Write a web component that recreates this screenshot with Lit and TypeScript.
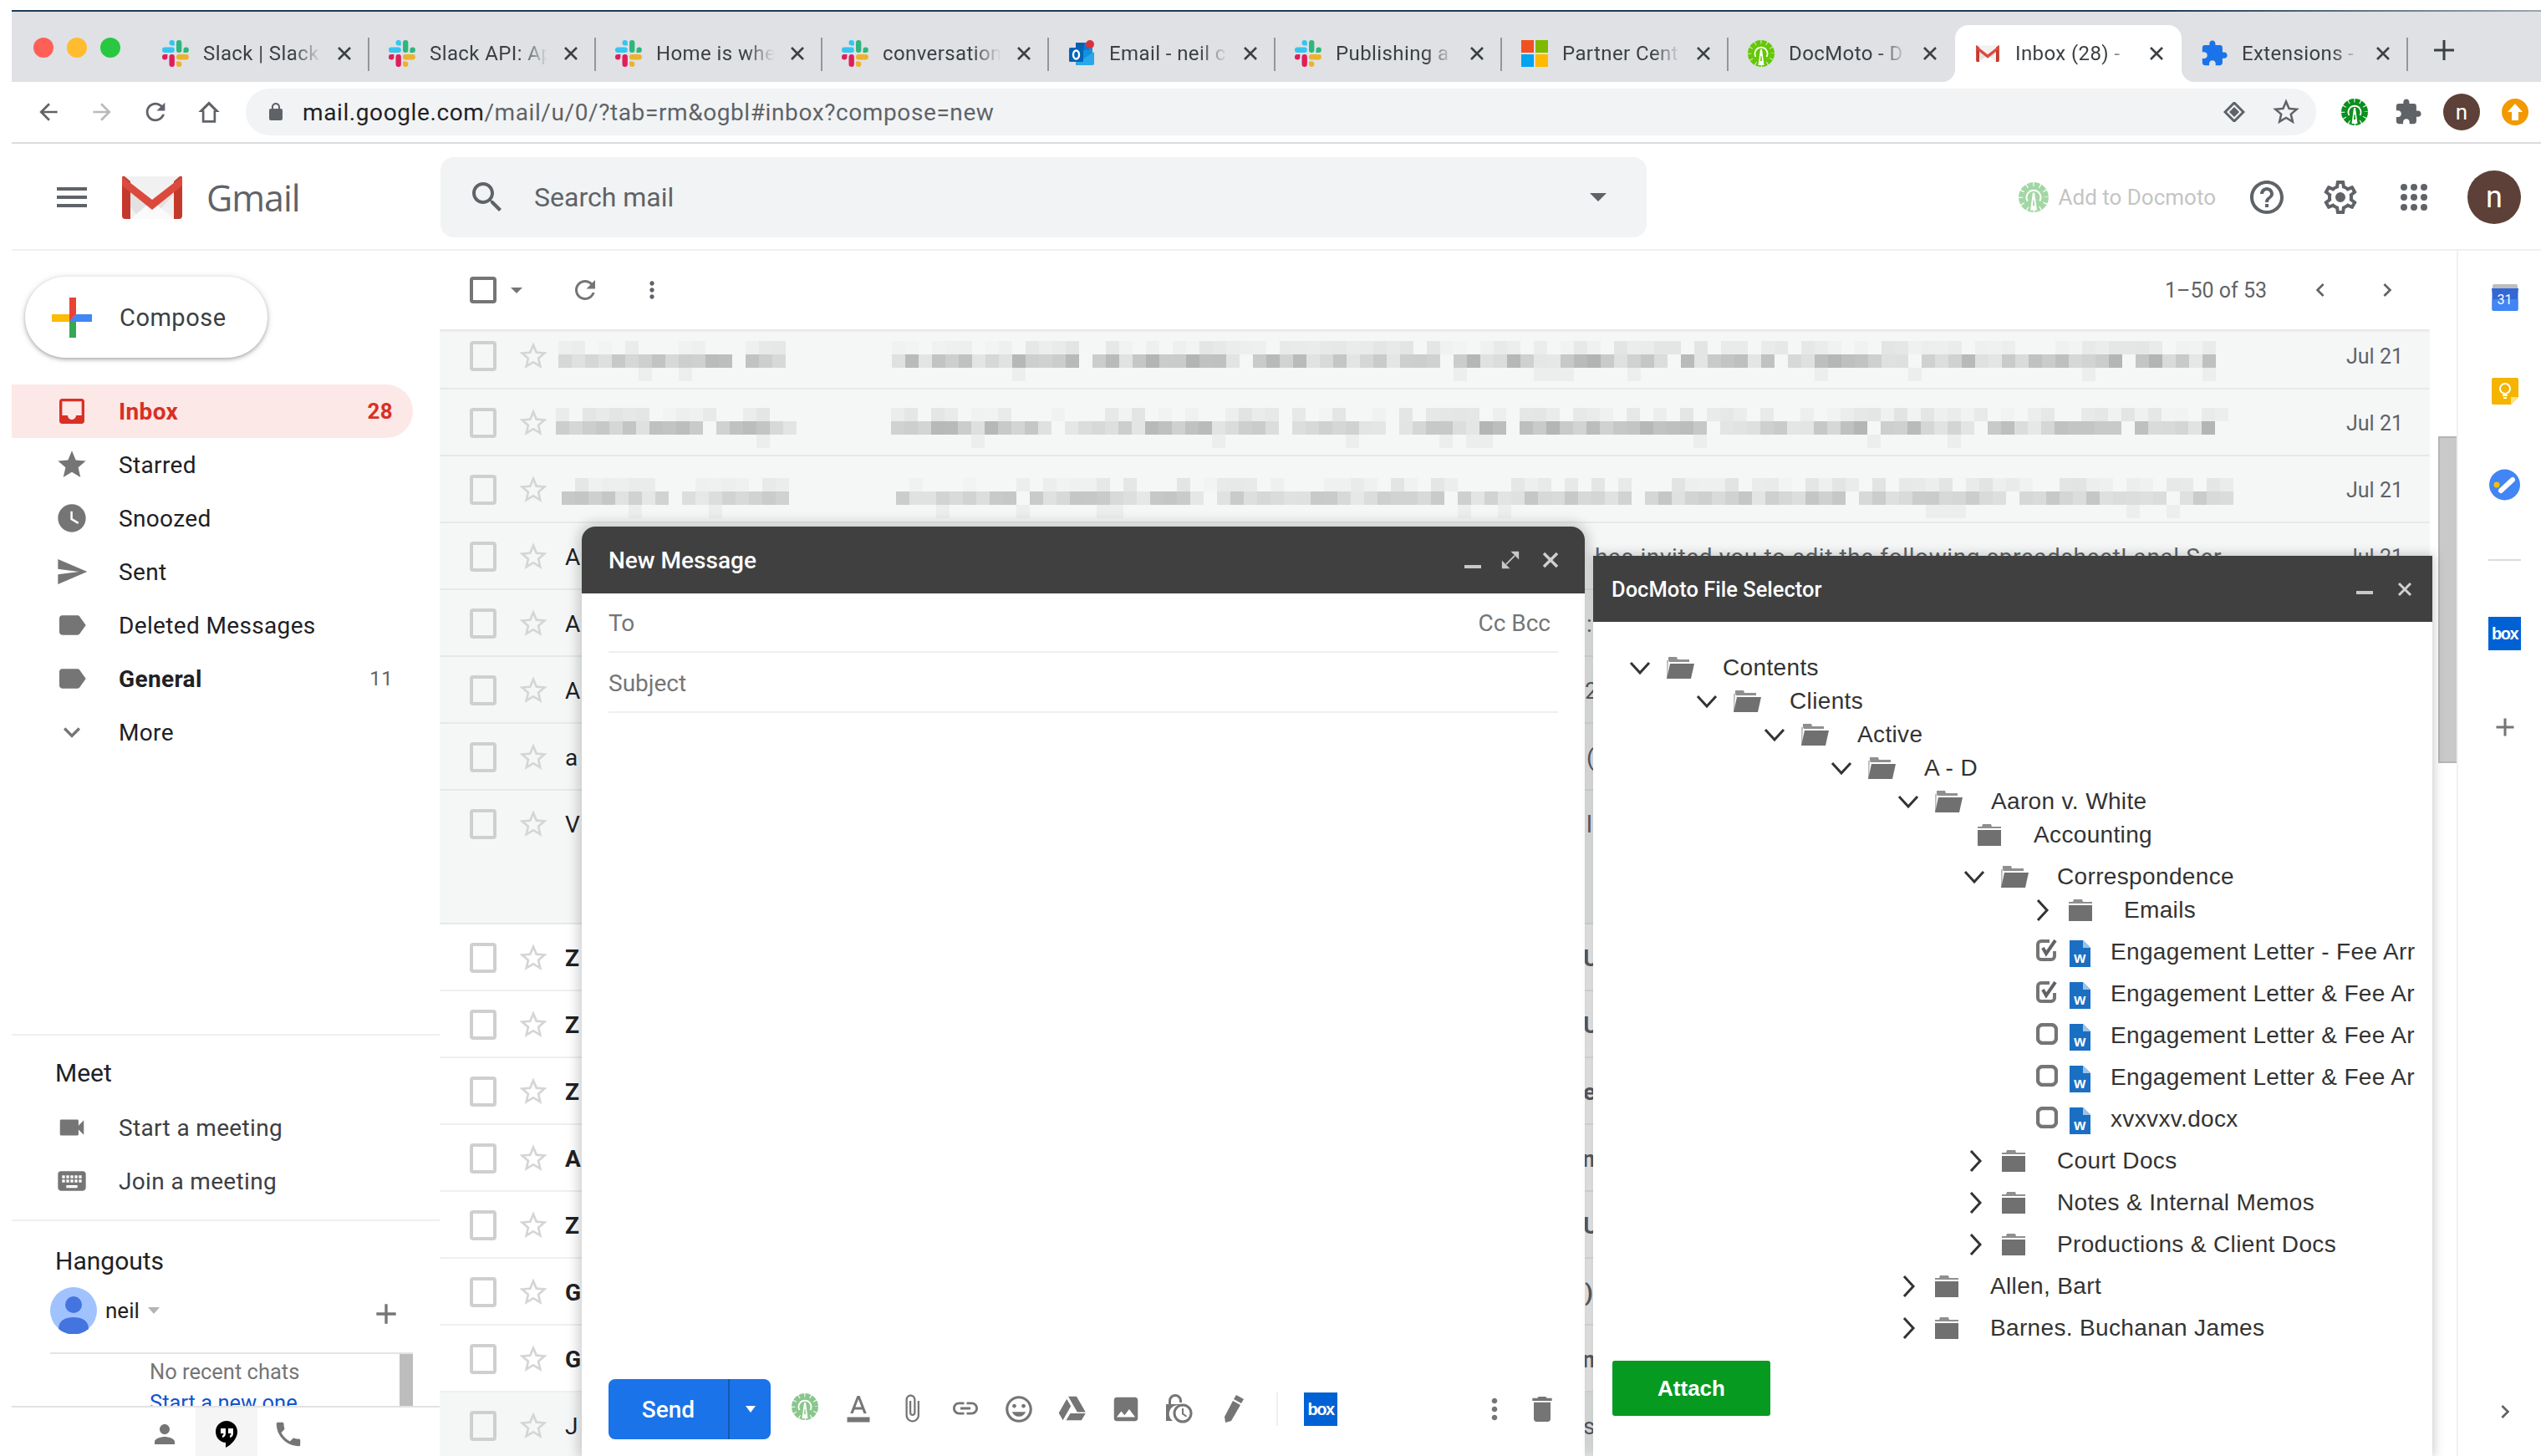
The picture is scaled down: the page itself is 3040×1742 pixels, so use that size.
import { LitElement, html, css, svg } from "lit";
import { customElement } from "lit/decorators.js";

const P = {
  menu: "M3 18h18v-2H3v2zm0-5h18v-2H3v2zm0-7v2h18V6H3z",
  search: "M15.5 14h-.79l-.28-.27C15.41 12.59 16 11.11 16 9.5 16 5.91 13.09 3 9.5 3S3 5.91 3 9.5 5.91 16 9.5 16c1.61 0 3.09-.59 4.23-1.57l.27.28v.79l5 4.99L20.49 19l-4.99-5zm-6 0C7.01 14 5 11.99 5 9.5S7.01 5 9.5 5 14 7.01 14 9.5 11.99 14 9.5 14z",
  starO: "M22 9.24l-7.19-.62L12 2 9.19 8.63 2 9.24l5.46 4.73L5.82 21 12 17.27 18.18 21l-1.63-7.03L22 9.24zM12 15.4l-3.76 2.27 1-4.28-3.32-2.88 4.38-.38L12 6.1l1.71 4.04 4.38.38-3.32 2.88 1 4.28L12 15.4z",
  star: "M12 17.27L18.18 21l-1.64-7.03L22 9.24l-7.19-.61L12 2 9.19 8.63 2 9.24l5.46 4.73L5.82 21z",
  refresh: "M17.65 6.35C16.2 4.9 14.21 4 12 4c-4.42 0-7.99 3.58-7.99 8s3.57 8 7.99 8c3.73 0 6.84-2.55 7.73-6h-2.08c-.82 2.33-3.04 4-5.65 4-3.31 0-6-2.69-6-6s2.69-6 6-6c1.66 0 3.14.69 4.22 1.78L13 11h7V4l-2.35 2.35z",
  more: "M12 8c1.1 0 2-.9 2-2s-.9-2-2-2-2 .9-2 2 .9 2 2 2zm0 2c-1.1 0-2 .9-2 2s.9 2 2 2 2-.9 2-2-.9-2-2-2zm0 6c-1.1 0-2 .9-2 2s.9 2 2 2 2-.9 2-2-.9-2-2-2z",
  help: "M11 18h2v-2h-2v2zm1-16C6.48 2 2 6.48 2 12s4.48 10 10 10 10-4.48 10-10S17.52 2 12 2zm0 18c-4.41 0-8-3.59-8-8s3.59-8 8-8 8 3.59 8 8-3.59 8-8 8zm0-14c-2.21 0-4 1.79-4 4h2c0-1.1.9-2 2-2s2 .9 2 2c0 2-3 1.75-3 5h2c0-2.25 3-2.5 3-5 0-2.21-1.79-4-4-4z",
  gear: "M19.43 12.98c.04-.32.07-.64.07-.98 0-.34-.03-.66-.07-.98l2.11-1.65c.19-.15.24-.42.12-.64l-2-3.46c-.09-.16-.26-.25-.44-.25-.06 0-.12.01-.17.03l-2.49 1c-.52-.4-1.08-.73-1.69-.98l-.38-2.65C14.46 2.18 14.25 2 14 2h-4c-.25 0-.46.18-.49.42l-.38 2.65c-.61.25-1.17.59-1.69.98l-2.49-1c-.06-.02-.12-.03-.18-.03-.17 0-.34.09-.43.25l-2 3.46c-.13.22-.07.49.12.64l2.11 1.65c-.04.32-.07.65-.07.98 0 .33.03.66.07.98l-2.11 1.65c-.19.15-.24.42-.12.64l2 3.46c.09.16.26.25.44.25.06 0 .12-.01.17-.03l2.49-1c.52.4 1.08.73 1.69.98l.38 2.65c.03.24.24.42.49.42h4c.25 0 .46-.18.49-.42l.38-2.65c.61-.25 1.17-.59 1.69-.98l2.49 1c.06.02.12.03.18.03.17 0 .34-.09.43-.25l2-3.46c.12-.22.07-.49-.12-.64l-2.11-1.65zm-1.98-1.71c.04.31.05.52.05.73 0 .21-.02.43-.05.73l-.14 1.13.89.7 1.08.84-.7 1.21-1.27-.51-1.04-.42-.9.68c-.43.32-.84.56-1.25.73l-1.06.43-.16 1.13-.2 1.35h-1.4l-.19-1.35-.16-1.13-1.06-.43c-.43-.18-.83-.41-1.23-.71l-.91-.7-1.06.43-1.27.51-.7-1.21 1.08-.84.89-.7-.14-1.13c-.03-.31-.05-.54-.05-.74s.02-.43.05-.73l.14-1.13-.89-.7-1.08-.84.7-1.21 1.27.51 1.04.42.9-.68c.43-.32.84-.56 1.25-.73l1.06-.43.16-1.13.2-1.35h1.39l.19 1.35.16 1.13 1.06.43c.43.18.83.41 1.23.71l.91.7 1.06-.43 1.27-.51.7 1.21-1.07.85-.89.7.14 1.13zM12 9a3 3 0 1 0 0 6 3 3 0 0 0 0-6z",
  ext: "M20.5 11H19V7c0-1.1-.9-2-2-2h-4V3.5C13 2.12 11.88 1 10.5 1S8 2.12 8 3.5V5H4c-1.1 0-1.99.9-1.99 2v3.8H3.5c1.49 0 2.7 1.21 2.7 2.7s-1.21 2.7-2.7 2.7H2V20c0 1.1.9 2 2 2h3.8v-1.5c0-1.49 1.21-2.7 2.7-2.7 1.49 0 2.7 1.21 2.7 2.7V22H17c1.1 0 2-.9 2-2v-4h1.5c1.38 0 2.5-1.12 2.5-2.5S21.88 11 20.5 11z",
  inbox: "M19 3H4.99C3.88 3 3 3.9 3 5v14c0 1.1.88 2 1.99 2H19c1.1 0 2-.9 2-2V5c0-1.1-.9-2-2-2zm0 12h-4c0 1.66-1.35 3-3 3s-3-1.34-3-3H5V5h14v10z",
  clock: "M11.99 2C6.47 2 2 6.48 2 12s4.47 10 9.99 10C17.52 22 22 17.52 22 12S17.52 2 11.99 2zM16.2 16.2L11 13V7h1.5v5.2l4.5 2.7-.8 1.3z",
  send: "M2.01 21L23 12 2.01 3 2 10l15 2-15 2z",
  label: "M17.63 5.84C17.27 5.33 16.67 5 16 5L5 5.01C3.9 5.01 3 5.9 3 7v10c0 1.1.9 1.99 2 1.99L16 19c.67 0 1.27-.33 1.63-.84L22 12l-4.37-6.16z",
  chevD: "M7.41 8.59L12 13.17l4.59-4.58L18 10l-6 6-6-6z",
  chevL: "M15.41 7.41L14 6l-6 6 6 6 1.41-1.41L10.83 12z",
  chevR: "M10 6L8.59 7.41 13.17 12l-4.58 4.58L10 18l6-6z",
  video: "M17 10.5V7c0-.55-.45-1-1-1H4c-.55 0-1 .45-1 1v10c0 .55.45 1 1 1h12c.55 0 1-.45 1-1v-3.5l4 4v-11l-4 4z",
  keyboard: "M20 5H4c-1.1 0-1.99.9-1.99 2L2 17c0 1.1.9 2 2 2h16c1.1 0 2-.9 2-2V7c0-1.1-.9-2-2-2zm-9 3h2v2h-2V8zm0 3h2v2h-2v-2zM8 8h2v2H8V8zm0 3h2v2H8v-2zm-1 2H5v-2h2v2zm0-3H5V8h2v2zm9 7H8v-2h8v2zm0-4h-2v-2h2v2zm0-3h-2V8h2v2zm3 3h-2v-2h2v2zm0-3h-2V8h2v2z",
  person: "M12 12c2.21 0 4-1.79 4-4s-1.79-4-4-4-4 1.79-4 4 1.79 4 4 4zm0 2c-2.67 0-8 1.34-8 4v2h16v-2c0-2.66-5.33-4-8-4z",
  phone: "M6.62 10.79c1.44 2.83 3.76 5.14 6.59 6.59l2.2-2.2c.27-.27.67-.36 1.02-.24 1.12.37 2.33.57 3.57.57.55 0 1 .45 1 1V20c0 .55-.45 1-1 1-9.39 0-17-7.61-17-17 0-.55.45-1 1-1h3.5c.55 0 1 .45 1 1 0 1.25.2 2.45.57 3.57.11.35.03.74-.25 1.02l-2.2 2.2z",
  lock: "M18 8h-1V6c0-2.76-2.24-5-5-5S7 3.24 7 6v2H6c-1.1 0-2 .9-2 2v10c0 1.1.9 2 2 2h12c1.1 0 2-.9 2-2V10c0-1.1-.9-2-2-2zM9 6c0-1.66 1.34-3 3-3s3 1.34 3 3v2H9V6z",
  back: "M20 11H7.83l5.59-5.59L12 4l-8 8 8 8 1.41-1.41L7.83 13H20v-2z",
  forward: "M12 4l-1.41 1.41L16.17 11H4v2h12.17l-5.58 5.59L12 20l8-8z",
  home: "M12 3L3 12h3.2v9h11.6v-9H21L12 3zm0 3.2l4.6 4.6h-.7V19H8.100v-8.200h-.7L12 6.200z",
  fmt: "M11 2L5.500 16h2.250l1.120-3h6.250l1.120 3h2.250L13 2h-2zm-1.380 9L12 4.670 14.380 11H9.620zM3 19h18v4H3z",
  clip: "M16.5 6v11.5c0 2.21-1.79 4-4 4s-4-1.79-4-4V5c0-1.38 1.12-2.5 2.500-2.500s2.500 1.120 2.500 2.500v10.500c0 .55-.45 1-1 1s-1-.45-1-1V6H10v9.500c0 1.380 1.120 2.500 2.500 2.500s2.500-1.120 2.500-2.500V5c0-2.210-1.790-4-4-4S7 2.790 7 5v12.500c0 3.040 2.460 5.500 5.500 5.500s5.500-2.460 5.500-5.500V6h-1.500z",
  link: "M3.900 12c0-1.710 1.390-3.100 3.100-3.100h4V7H7c-2.760 0-5 2.240-5 5s2.240 5 5 5h4v-1.900H7c-1.710 0-3.100-1.390-3.100-3.100zM8 13h8v-2H8v2zm9-6h-4v1.900h4c1.710 0 3.100 1.390 3.100 3.100s-1.390 3.100-3.100 3.100h-4V17h4c2.760 0 5-2.240 5-5s-2.240-5-5-5z",
  emoji: "M11.990 2C6.470 2 2 6.480 2 12s4.470 10 9.990 10C17.520 22 22 17.520 22 12S17.520 2 11.990 2zM12 20c-4.420 0-8-3.580-8-8s3.580-8 8-8 8 3.580 8 8-3.580 8-8 8zm3.500-9c.83 0 1.500-.67 1.500-1.500S16.330 8 15.500 8 14 8.670 14 9.500s.67 1.500 1.500 1.500zm-7 0c.83 0 1.500-.67 1.500-1.500S9.330 8 8.500 8 7 8.670 7 9.500 7.670 11 8.500 11zm3.500 6.500c2.330 0 4.310-1.460 5.110-3.500H6.890c.8 2.040 2.780 3.500 5.110 3.500z",
  drive: "M8.700 2.500h6.600l7.200 12.500h-6.600zM7.500 4.500l3.300 5.700L4.400 21.500 1.100 15.700zM10.300 16h12.200l-3.300 5.500H7z",
  photo: "M21 19V5c0-1.100-.9-2-2-2H5c-1.100 0-2 .9-2 2v14c0 1.100.9 2 2 2h14c1.100 0 2-.9 2-2zM8.500 13.500l2.500 3.010L14.500 12l4.500 6H5l3.500-4.500z",
  trash: "M6 19c0 1.100.9 2 2 2h8c1.100 0 2-.9 2-2V7H6v12zM19 4h-3.500l-1-1h-5l-1 1H5v2h14V4z",
  plus: "M19 13h-6v6h-2v-6H5v-2h6V5h2v6h6v2z",
};

const ic = (d: string, size: number, fill: string) =>
  html`<svg width=${size} height=${size} viewBox="0 0 24 24" fill=${fill}><path d=${d}></path></svg>`;

const slack = (s = 32) => html`<svg width=${s} height=${s} viewBox="0 0 54 54">
  <path fill="#36C5F0" d="M19.712.133a5.381 5.381 0 0 0-5.376 5.387 5.381 5.381 0 0 0 5.376 5.386h5.376V5.520A5.381 5.381 0 0 0 19.712.133m0 14.365H5.376A5.381 5.381 0 0 0 0 19.884a5.381 5.381 0 0 0 5.376 5.387h14.336a5.381 5.381 0 0 0 5.376-5.387 5.381 5.381 0 0 0-5.376-5.386"/>
  <path fill="#2EB67D" d="M53.760 19.884a5.381 5.381 0 0 0-5.376-5.386 5.381 5.381 0 0 0-5.376 5.386v5.387h5.376a5.381 5.381 0 0 0 5.376-5.387m-14.336 0V5.520A5.381 5.381 0 0 0 34.048.133a5.381 5.381 0 0 0-5.376 5.387v14.364a5.381 5.381 0 0 0 5.376 5.387 5.381 5.381 0 0 0 5.376-5.387"/>
  <path fill="#ECB22E" d="M34.048 54a5.381 5.381 0 0 0 5.376-5.387 5.381 5.381 0 0 0-5.376-5.386h-5.376v5.386A5.381 5.381 0 0 0 34.048 54m0-14.365h14.336a5.381 5.381 0 0 0 5.376-5.386 5.381 5.381 0 0 0-5.376-5.387H34.048a5.381 5.381 0 0 0-5.376 5.387 5.381 5.381 0 0 0 5.376 5.386"/>
  <path fill="#E01E5A" d="M0 34.249a5.381 5.381 0 0 0 5.376 5.386 5.381 5.381 0 0 0 5.376-5.386v-5.387H5.376A5.381 5.381 0 0 0 0 34.250m14.336-.001v14.364A5.381 5.381 0 0 0 19.712 54a5.381 5.381 0 0 0 5.376-5.387V34.250a5.381 5.381 0 0 0-5.376-5.387 5.381 5.381 0 0 0-5.376 5.387"/>
</svg>`;

const outlook = html`<svg width="32" height="32" viewBox="0 0 32 32">
  <rect x="9" y="3" width="20" height="26" fill="#1490df"/><rect x="9" y="3" width="10" height="9" fill="#0a5fb0"/><rect x="19" y="3" width="6" height="9" fill="#0f78d4"/>
  <path d="M9 15l10 7 12-8v14a2 2 0 0 1-2 2H9z" fill="#28a8ea"/><circle cx="26" cy="5" r="5" fill="#d8333a"/>
  <rect x="1" y="9" width="17" height="17" rx="1.500" fill="#0364b8"/><ellipse cx="9.500" cy="17.500" rx="3.500" ry="5" fill="none" stroke="#fff" stroke-width="2.400"/>
</svg>`;

const ms = html`<svg width="32" height="32" viewBox="0 0 32 32"><rect width="15" height="15" fill="#f25022"/><rect x="17" width="15" height="15" fill="#7fba00"/><rect y="17" width="15" height="15" fill="#00a4ef"/><rect x="17" y="17" width="15" height="15" fill="#ffb900"/></svg>`;

const docmoto = (c: string, s = 32, o = 1) => html`<svg width=${s} height=${s} viewBox="0 0 32 32" opacity=${o}>
  <circle cx="16" cy="16" r="13.500" fill="none" stroke=${c} stroke-width="5" stroke-dasharray="6 1.070"/>
  <circle cx="16" cy="16" r="11.500" fill=${c}/>
  <path d="M9.500 20a7.500 7.500 0 1 1 13 0" fill="none" stroke="#fff" stroke-width="1.800"/>
  <path d="M15 11h2l2.500 19h-7z" fill="#fff"/><path d="M15.500 19h1l.5 6h-2z" fill=${c}/>
</svg>`;

const mLogo = (w: number, h: number) => html`<svg width=${w} height=${h} viewBox="0 0 72 52">
  <path fill="#f1f1f1" d="M4 1h64v51H4z"/><path fill="#e2e2e2" d="M10 14l26 21 26-21v8L36 52H22L10 38z"/><path fill="#fafafa" d="M10 52l26-22 26 22z"/>
  <path fill="#c5392c" d="M0 3q0-3 3-2l7 6v45H4q-4 0-4-4zM72 3q0-3-3-2l-7 6v45h6q4 0 4-4z"/>
  <path fill="#db4a3c" d="M0 1l36 28L72 1v11L36 41 0 12z"/>
</svg>`;

const closeX = html`<svg class="tx" width="18" height="16" viewBox="0 0 18 16"><path d="M2 1l14 14M16 1L2 15" stroke="#3c4043" stroke-width="2.600" fill="none"/></svg>`;

const folderOpen = html`<svg width="34" height="26" viewBox="0 0 34 26"><path d="M3 0h10l1 3h14v3H4l-1-2z" fill="#8f8f8f"/><path d="M1 4h2v1l-1 21H1z" fill="#bdbdbd"/><path d="M5 8h29l-4 18H1z" fill="#707070"/></svg>`;
const folderClosed = html`<svg width="28" height="26" viewBox="0 0 28 26"><path d="M6 0h10l1 3h11v2H0V3h5z" fill="#8f8f8f"/><rect y="7" width="28" height="19" fill="#707070"/></svg>`;
const chevDown = html`<svg width="26" height="16" viewBox="0 0 26 16"><path d="M2 2l11 12L24 2" fill="none" stroke="#333" stroke-width="3"/></svg>`;
const chevRight = html`<svg width="16" height="26" viewBox="0 0 16 26"><path d="M2 1l11 12L2 25" fill="none" stroke="#333" stroke-width="3"/></svg>`;
const wordIcon = html`<span class="word"><svg width="25" height="32" viewBox="0 0 25 32"><path d="M0 0h16l9 9v23H0z" fill="#1b6fc2"/><path d="M16 0l9 9h-9z" fill="#9cc3e8"/></svg><b>w</b></span>`;
const cbOn = html`<svg width="26" height="26" viewBox="0 0 26 26"><path d="M22 14v6a4 4 0 0 1-4 4H6a4 4 0 0 1-4-4V6a4 4 0 0 1 4-4h10" fill="none" stroke="#757575" stroke-width="4"/><path d="M8 10l4 7L23 1" fill="none" stroke="#5f6368" stroke-width="4"/></svg>`;
const cbOff = html`<svg width="26" height="26" viewBox="0 0 26 26"><rect x="2" y="2" width="22" height="22" rx="6" fill="none" stroke="#757575" stroke-width="4.400"/></svg>`;

const hash = (n: number) => { const v = Math.sin(n * 127.1 + 11.7) * 43758.5453; return v - Math.floor(v); };

/* Pixelated privacy blur: a 16px grid of grey cells in three text lines. */
function blurCells(seed: number, x0: number, x1: number, dim: number) {
  const cells: ReturnType<typeof svg>[] = [];
  let i = 0;
  let nextGap = 8 + Math.floor(hash(seed) * 8);
  for (let x = x0; x < x1; x += 16, i++) {
    const gap = i === nextGap;
    if (gap) nextGap = i + 7 + Math.floor(hash(seed + i) * 12);
    const r = hash(seed + i * 3.1), t = hash(seed + i * 7.3), b = hash(seed + i * 5.7);
    if (!gap) {
      const m = Math.round(dim + r * (230 - dim));
      cells.push(svg`<rect x=${x} y="16" width="16" height="16" fill=${`rgb(${m},${m + 2},${m + 2})`}></rect>`);
    }
    if (t > 0.35) {
      const v = Math.round(226 + hash(seed + i) * 16);
      cells.push(svg`<rect x=${x} y="0" width="16" height="16" fill=${`rgb(${v},${v + 2},${v + 2})`}></rect>`);
    }
    if (b > 0.88) cells.push(svg`<rect x=${x} y="32" width="16" height="16" fill="#eceeee"></rect>`);
  }
  return cells;
}

const TABS = [
  { i: "slack", t: "Slack | Slack" },
  { i: "slack", t: "Slack API: Ap" },
  { i: "slack", t: "Home is whe" },
  { i: "slack", t: "conversation" },
  { i: "outlook", t: "Email - neil c" },
  { i: "slack", t: "Publishing a" },
  { i: "ms", t: "Partner Cent" },
  { i: "docmoto", t: "DocMoto - D" },
  { i: "gmail", t: "Inbox (28) -", active: true },
  { i: "ext", t: "Extensions -" },
];

const NAV = [
  { l: "Inbox", n: "28", d: P.inbox, cls: "active", c: "#d93025" },
  { l: "Starred", d: P.star },
  { l: "Snoozed", d: P.clock },
  { l: "Sent", d: P.send },
  { l: "Deleted Messages", d: P.label },
  { l: "General", n: "11", d: P.label, cls: "bold" },
  { l: "More", d: P.chevD },
];

const ROWS = [
  { blur: [[668, 940, 1067, 2650, 178, 20]] },
  { blur: [[665, 938, 1066, 2666, 178, 20]] },
  { blur: [[672, 944, 1072, 2668, 196, 24]] },
  { s: "A", sub: "has invited you to edit the following spreadsheet! anal Ser", w: 1232, wide: true },
  { s: "A", sub: ":", w: 1222 },
  { s: "A", sub: "2", w: 1220 },
  { s: "a", sub: "(", w: 1222 },
  { s: "V", sub: "l", w: 1222, tall: true },
  { s: "Z", sub: "U", w: 1218, b: true },
  { s: "Z", sub: "U", w: 1218, b: true },
  { s: "Z", sub: "e", w: 1218, b: true },
  { s: "A", sub: "n", w: 1217, b: true },
  { s: "Z", sub: "U", w: 1218, b: true },
  { s: "G", sub: ")", w: 1220, b: true },
  { s: "G", sub: "n", w: 1217, b: true },
  { s: "J", sub: "s", w: 1218 },
];

const TREE: any[] = [
  { l: "Contents", x: 41, k: "open" },
  { l: "Clients", x: 121, k: "open" },
  { l: "Active", x: 202, k: "open" },
  { l: "A - D", x: 282, k: "open" },
  { l: "Aaron v. White", x: 362, k: "open" },
  { l: "Accounting", x: 460, k: "plain" },
  { l: "Correspondence", x: 441, k: "open", cls: "gap" },
  { l: "Emails", x: 523, k: "closed" },
  { l: "Engagement Letter - Fee Arr", k: "file", on: true, cls: "wide first" },
  { l: "Engagement Letter & Fee Ar", k: "file", on: true, cls: "wide" },
  { l: "Engagement Letter & Fee Ar", k: "file", cls: "wide" },
  { l: "Engagement Letter & Fee Ar", k: "file", cls: "wide" },
  { l: "xvxvxv.docx", k: "file", cls: "wide" },
  { l: "Court Docs", x: 443, k: "closed", cls: "wide" },
  { l: "Notes & Internal Memos", x: 443, k: "closed", cls: "wide" },
  { l: "Productions & Client Docs", x: 443, k: "closed", cls: "wide" },
  { l: "Allen, Bart", x: 363, k: "closed", cls: "wide" },
  { l: "Barnes. Buchanan James", x: 363, k: "closed", cls: "wide" },
];

@customElement("app-root")
export class AppRoot extends LitElement {
  static styles = css`
    :host { display: block; width: 3040px; height: 1742px; font-family: Roboto, "Liberation Sans", sans-serif; color: #202124; }
    * { box-sizing: border-box; }
    svg { display: block; flex: none; }
    .page { position: relative; width: 3040px; height: 1742px; overflow: hidden; background: #fff; padding: 12px 0 0 14px; display: flex; flex-direction: column; }
    .topline { height: 2px; background: linear-gradient(to right, #1d3b57 0, #1d3b57 85%, #9aa6b0 100%); flex: none; }

    .tabstrip { flex: none; height: 84px; background: #dfe1e5; display: flex; }
    .lights { width: 157px; padding: 31px 0 0 26px; display: flex; gap: 16px; flex: none; }
    .light { width: 24px; height: 24px; border-radius: 50%; }
    .tab { position: relative; width: 271px; height: 84px; flex: none; padding: 34px 0 0 23px; display: flex; align-items: flex-start; }
    .tab .ti { width: 32px; height: 32px; display: flex; align-items: center; justify-content: center; flex: none; }
    .tab .tt { margin-left: 17px; width: 146px; height: 32px; line-height: 32px; font-size: 24px; letter-spacing: .4px; color: #3c4043; white-space: nowrap; -webkit-mask-image: linear-gradient(to right, #000 74%, transparent 97%); mask-image: linear-gradient(to right, #000 74%, transparent 97%); flex: none; }
    .tab .tx { margin: 8px 0 0 14px; }
    .tab.sep::after { content: ""; position: absolute; right: 0; top: 31px; width: 2px; height: 40px; background: #94969b; }
    .tab.active { margin-top: 16px; height: 68px; padding-top: 18px; background: #fff; border-radius: 16px 16px 0 0; }
    .tab.active::before, .tab.active::after { content: ""; position: absolute; bottom: 0; width: 16px; height: 16px; }
    .tab.active::before { left: -16px; background: radial-gradient(circle at 0 0, transparent 16px, #fff 16.500px); }
    .tab.active::after { right: -16px; background: radial-gradient(circle at 100% 0, transparent 16px, #fff 16.500px); }
    .newtab { margin: 34px 0 0 31px; }

    .toolbar { flex: none; height: 74px; border-bottom: 2px solid #dadce0; display: flex; align-items: flex-start; padding: 8px 0 0 12px; }
    .tslot { width: 64px; height: 56px; display: flex; align-items: center; justify-content: center; flex: none; }
    .addr { margin-left: 12px; width: 2477px; height: 56px; border-radius: 28px; background: #f1f3f4; display: flex; align-items: center; padding: 0 17px 0 24px; flex: none; }
    .url { margin-left: 20px; font-size: 28px; letter-spacing: .6px; color: #5f6368; white-space: nowrap; }
    .url b { font-weight: 400; color: #202124; }
    .addr .right { margin-left: auto; display: flex; align-items: center; gap: 30px; }
    .avatar-s { width: 44px; height: 44px; border-radius: 50%; background: #5d4037; color: #fff; font-size: 26px; display: flex; align-items: center; justify-content: center; }
    .orange { width: 32px; height: 32px; border-radius: 50%; background: #f29900; display: flex; align-items: center; justify-content: center; }
    .exts { margin-left: 14px; display: flex; }

    .header { flex: none; height: 128px; border-bottom: 2px solid #efefef; padding-top: 2px; display: flex; align-items: center; position: relative; }
    .brand { width: 513px; flex: none; display: flex; align-items: center; padding-left: 48px; }
    .brand .logo { margin-left: 36px; }
    .brand .word-g { margin-left: 29px; font-family: "Open Sans", Roboto, sans-serif; font-size: 43px; color: #5f6368; letter-spacing: -1px; }
    .searchbox { width: 1443px; height: 96px; border-radius: 16px; background: #f1f3f4; display: flex; align-items: center; padding-left: 32px; flex: none; }
    .searchbox span { margin-left: 32px; font-size: 32px; color: #5f6368; }
    .searchbox .caret { margin-left: auto; margin-right: 48px; width: 0; height: 0; border-left: 10px solid transparent; border-right: 10px solid transparent; border-top: 10px solid #5f6368; }
    .hright { margin-left: auto; display: flex; align-items: center; padding-right: 24px; }
    .add { margin-left: 12px; font-size: 26px; color: #c4c4c4; margin-right: 37px; }
    .hright .gaps { display: flex; align-items: center; gap: 40px; }
    .dots { width: 48px; height: 48px; }
    .avatar { width: 64px; height: 64px; border-radius: 50%; background: #5d4037; color: #fff; font-size: 36px; display: flex; align-items: center; justify-content: center; }

    .body { flex: 1; min-height: 0; display: flex; }
    .side { width: 512px; flex: none; display: flex; flex-direction: column; }
    .compose-btn { margin: 31px 0 0 16px; width: 290px; height: 97px; border-radius: 49px; background: #fff; box-shadow: 0 2px 4px rgba(60,64,67,.35), 0 1px 8px rgba(60,64,67,.18); display: flex; align-items: center; padding-left: 32px; flex: none; }
    .compose-btn span { margin-left: 33px; font-size: 29px; color: #3c4043; letter-spacing: .5px; }
    .nav { margin-top: 32px; flex: none; }
    .nrow { width: 480px; height: 64px; display: flex; align-items: center; padding: 0 24px 0 54px; font-size: 28px; letter-spacing: .35px; color: #202124; border-radius: 0 32px 32px 0; }
    .nrow .ni { width: 36px; display: flex; justify-content: center; flex: none; }
    .nrow .nl { margin-left: 38px; }
    .nrow .nc { margin-left: auto; font-size: 24px; color: #5f6368; }
    .nrow.active { background: #fce8e6; color: #d93025; font-weight: 700; }
    .nrow.active .nc { color: #d93025; font-weight: 700; font-size: 26px; }
    .nrow.bold { font-weight: 700; }
    .nrow.bold .nc { font-weight: 400; }
    .lower { margin-top: auto; border-top: 2px solid #efefef; flex: none; }
    .lhead { padding-left: 52px; font-size: 30px; color: #202124; }
    .lhead.meet { height: 78px; padding-top: 12px; line-height: 66px; }
    .lhead.hang { height: 79px; padding-top: 16px; line-height: 63px; }
    .mrow { height: 64px; display: flex; align-items: center; padding-left: 54px; font-size: 28px; letter-spacing: .35px; color: #3c4043; }
    .mrow .ni { width: 36px; display: flex; justify-content: center; flex: none; }
    .mrow .nl { margin-left: 38px; }
    .sep2 { margin-top: 14px; height: 2px; background: #efefef; }
    .who { height: 56px; display: flex; align-items: center; padding: 0 44px 0 46px; }
    .who .name { margin-left: 10px; font-size: 26px; color: #202124; }
    .who .car { margin-left: 10px; width: 0; height: 0; border-left: 7px solid transparent; border-right: 7px solid transparent; border-top: 8px solid #b4b4b4; }
    .who .add-p { margin-left: auto; margin-top: 8px; }
    .chats { position: relative; margin: 22px 0 0 46px; width: 434px; height: 64px; border-top: 2px solid #e4e4e4; padding-left: 119px; overflow: hidden; font-size: 25.500px; color: #757575; text-align: left; }
    .chats div { line-height: 42px; white-space: nowrap; }
    .chats a { display: block; color: #1155cc; line-height: 32px; white-space: nowrap; }
    .chats i { position: absolute; right: 0; top: 0; width: 16px; height: 62px; background: #bdbdbd; }
    .foot { height: 60px; border-top: 2px solid #e2e2e2; padding-left: 146px; display: flex; }
    .foot div { width: 74px; padding-top: 5px; display: flex; align-items: center; justify-content: center; }
    .foot .sel { background: #f5f5f5; }

    .list { width: 2381px; flex: none; display: flex; flex-direction: column; overflow: hidden; }
    .ltools { position: relative; z-index: 1; flex: none; height: 94px; margin-bottom: -8px; background: #fff; box-shadow: 0 2px 3px rgba(0,0,0,.08); display: flex; align-items: center; padding: 0 0 0 36px; }
    .bigcb { width: 32px; height: 32px; border: 4px solid #757575; border-radius: 4px; }
    .lcar { margin-left: 17px; width: 0; height: 0; border-left: 7px solid transparent; border-right: 7px solid transparent; border-top: 7px solid #757575; }
    .lref { margin-left: 57px; }
    .lmore { margin-left: 46px; }
    .count { margin-left: auto; font-size: 25px; color: #5f6368; }
    .lnav { margin-left: 48px; display: flex; gap: 48px; margin-right: 35px; }
    .row { flex: none; height: 80px; border-bottom: 2px solid #e4e9ec; background: #f5f7f7; display: flex; align-items: center; padding: 2px 0 0 36px; overflow: hidden; white-space: nowrap; font-size: 28px; }
    .row.unread { background: #fff; border-bottom-color: #efefef; }
    .row.tall { height: 160px; padding-bottom: 80px; }
    .row .cb { flex: none; width: 32px; height: 36px; border: 4px solid #cfcfcf; border-radius: 4px; }
    .row .st { margin-left: 24px; }
    .row .sender { margin-left: 18px; flex: none; color: #202124; }
    .row.unread .sender, .row.unread .subj { font-weight: 700; }
    .row .subj { color: #5f6368; }
    .row .subj.long { letter-spacing: .6px; }
    .row .date { margin-left: auto; margin-right: 32px; font-size: 25px; color: #5f6368; flex: none; }
    .row .bl { flex: none; align-self: flex-start; margin-left: -2px; }
    .sbar { width: 32px; flex: none; padding: 222px 0 0 10px; }
    .sbar div { width: 22px; height: 391px; background: #c9c9c9; border: 2px solid #b5b5b5; border-right: none; }

    .rail { flex: 1; border-left: 2px solid #f1f1f1; display: flex; flex-direction: column; align-items: center; padding: 40px 0 37px 12px; }
    .rail .dv { width: 39px; height: 2px; background: #dadce0; margin-top: 70px; }
    .rail .m2 { margin-top: 80px; }
    .rail .m3 { margin-top: 77px; }
    .rail .m4 { margin-top: 67px; }
    .rail .m5 { margin-top: 74px; }
    .rail .bottom { margin-top: auto; }
    .cal { position: relative; }
    .cal span { position: absolute; left: 0; right: 0; top: 9px; text-align: center; color: #fff; font-size: 16px; line-height: 20px; }

    .box { background: #0061d5; color: #fff; font-family: "Liberation Sans", sans-serif; font-weight: 700; letter-spacing: -1.500px; display: flex; align-items: center; justify-content: center; }
    .box.rb { width: 39px; height: 40px; font-size: 20px; }
    .box.cb2 { width: 40px; height: 40px; font-size: 20px; }

    .win { position: absolute; background: #fff; display: flex; flex-direction: column; z-index: 5; }
    .win.cmp { left: 696px; top: 630px; width: 1200px; height: 1112px; border-radius: 16px 16px 0 0; box-shadow: 0 0 16px 3px rgba(0,0,0,.22); }
    .win.doc { left: 1906px; top: 665px; width: 1004px; height: 1077px; box-shadow: 0 0 12px 2px rgba(0,0,0,.2); }
    .whead { flex: none; background: #404040; color: #fff; display: flex; align-items: center; font-weight: 500; }
    .cmp .whead { height: 80px; border-radius: 16px 16px 0 0; padding: 0 30px 0 32px; font-size: 28px; }
    .wctl { margin-left: auto; display: flex; align-items: center; }
    .field { margin: 0 32px; height: 72px; flex: none; border-bottom: 2px solid #efefef; padding: 2px 9px 0 0; display: flex; align-items: center; justify-content: space-between; font-size: 28px; color: #757575; }
    .field.f1 { height: 71px; }
    .cbody { flex: 1; }
    .cfoot { flex: none; padding: 0 31px 20px 32px; display: flex; align-items: center; }
    .sendb { width: 194px; height: 72px; border-radius: 8px; background: #1a73e8; display: flex; color: #fff; font-size: 28px; font-weight: 500; flex: none; }
    .sendb .a { width: 145px; display: flex; align-items: center; justify-content: center; border-right: 2px solid #1558b0; }
    .sendb .b { flex: 1; display: flex; align-items: center; justify-content: center; }
    .sendb .b i { width: 0; height: 0; border-left: 6px solid transparent; border-right: 6px solid transparent; border-top: 8px solid #fff; }
    .tools { margin-left: 9px; display: flex; }
    .tools div { width: 64px; display: flex; justify-content: center; }
    .cdiv { margin-left: 20px; width: 2px; height: 40px; background: #efefef; }
    .cb2 { margin-left: 31px; }
    .cright { margin-left: auto; display: flex; gap: 17px; }

    .doc .whead { height: 79px; padding: 0 24px 0 22px; font-size: 25.500px; }
    .tree { flex: none; padding-top: 35px; font-family: "Liberation Sans", Arial, sans-serif; font-size: 28px; letter-spacing: .35px; color: #333; }
    .node { height: 40px; display: flex; align-items: center; white-space: nowrap; width: 982px; }
    .node.gap { margin-top: 10px; }
    .node.wide { height: 50px; }
    .node.first { margin-top: 5px; }
    .node .ch { width: 46px; flex: none; display: flex; padding-left: 2px; }
    .node .ch.r { padding-left: 7px; }
    .node .fo { width: 66px; flex: none; }
    .node .cbx { width: 40px; flex: none; margin-bottom: 4px; }
    .node .fi { width: 49px; flex: none; }
    .node .pl { width: 67px; flex: none; }
    .word { position: relative; display: block; width: 25px; height: 32px; margin-top: 4px; }
    .word b { position: absolute; left: 0; right: 0; bottom: 2px; text-align: center; color: #fff; font-size: 18px; line-height: 18px; font-weight: 700; }
    .attach { margin: 14px 0 0 23px; width: 189px; height: 66px; background: #079a21; color: #fff; border-radius: 3px; display: flex; align-items: center; justify-content: center; font-family: "Liberation Sans", Arial, sans-serif; font-size: 26px; font-weight: 700; flex: none; }
  `;

  private tabIcon(i: string) {
    switch (i) {
      case "slack": return slack();
      case "outlook": return outlook;
      case "ms": return ms;
      case "docmoto": return docmoto("#64c800");
      case "gmail": return mLogo(28, 20);
      default: return ic(P.ext, 34, "#1a73e8");
    }
  }

  private renderTabs() {
    return TABS.map((t, idx) => {
      const next = TABS[idx + 1];
      const sep = !t.active && !(next && next.active);
      return html`<div class="tab ${t.active ? "active" : ""} ${sep ? "sep" : ""}">
        <div class="ti">${this.tabIcon(t.i)}</div><div class="tt">${t.t}</div>${closeX}
      </div>`;
    });
  }

  private renderRow(r: any, idx: number) {
    const unread = r.b ? "unread" : "";
    let middle;
    if (r.blur) {
      const [a, b, c, d, dim, top] = r.blur[0];
      middle = html`<svg class="bl" width="2051" height="48" viewBox="656 0 2051 48" style="margin-top:${top}px">${blurCells(idx * 40 + 1, a, b, dim)}${blurCells(idx * 90 + 7, c, d, dim)}</svg>`;
    } else {
      middle = html`<span class="sender" style="width:${r.w}px">${r.s}</span><span class="subj ${r.wide ? "long" : ""}">${r.sub}</span>`;
    }
    return html`<div class="row ${unread} ${r.tall ? "tall" : ""}">
      <div class="cb"></div><div class="st">${ic(P.starO, 40, "#d5d5d5")}</div>
      ${middle}
      ${idx < 7 ? html`<span class="date">Jul 21</span>` : ""}
    </div>`;
  }

  private renderNode(n: any) {
    if (n.k === "file") {
      return html`<div class="node ${n.cls}" style="padding-left:530px">
        <div class="cbx">${n.on ? cbOn : cbOff}</div><div class="fi">${wordIcon}</div><span>${n.l}</span></div>`;
    }
    if (n.k === "plain") {
      return html`<div class="node" style="padding-left:${n.x}px"><div class="pl">${folderClosed}</div><span>${n.l}</span></div>`;
    }
    const open = n.k === "open";
    const extra = open ? 2 : 0;
    return html`<div class="node ${n.cls || ""}" style="padding-left:${n.x}px">
      <div class="ch ${open ? "" : "r"}">${open ? chevDown : chevRight}</div>
      <div class="fo" style="width:${66 + extra}px">${open ? folderOpen : folderClosed}</div><span>${n.l}</span></div>`;
  }

  render() {
    return html`<div class="page">
      <div class="topline"></div>
      <div class="tabstrip">
        <div class="lights">
          <div class="light" style="background:#ff5f57"></div>
          <div class="light" style="background:#febc2e"></div>
          <div class="light" style="background:#28c840"></div>
        </div>
        ${this.renderTabs()}
        <div class="newtab"><svg width="24" height="24" viewBox="0 0 24 24"><path d="M12 0v24M0 12h24" stroke="#3c4043" stroke-width="3"/></svg></div>
      </div>

      <div class="toolbar">
        <div class="tslot">${ic(P.back, 32, "#5f6368")}</div>
        <div class="tslot">${ic(P.forward, 32, "#b8babd")}</div>
        <div class="tslot">${ic(P.refresh, 34, "#5f6368")}</div>
        <div class="tslot">${ic(P.home, 34, "#5f6368")}</div>
        <div class="addr">
          ${ic(P.lock, 24, "#5f6368")}
          <span class="url"><b>mail.google.com</b>/mail/u/0/?tab=rm&amp;ogbl#inbox?compose=new</span>
          <div class="right">
            <svg width="26" height="24" viewBox="0 0 26 24"><path d="M13 1L2 12l11 11 11-11z" fill="none" stroke="#5f6368" stroke-width="3"/><path d="M13 6l-6 6 6 6 6-6z" fill="#5f6368"/></svg>
            ${ic(P.starO, 38, "#5f6368")}
          </div>
        </div>
        <div class="exts">
          <div class="tslot">${docmoto("#0b8f1d")}</div>
          <div class="tslot">${ic(P.ext, 34, "#5f6368")}</div>
          <div class="tslot"><div class="avatar-s">n</div></div>
          <div class="tslot"><div class="orange"><svg width="20" height="22" viewBox="0 0 20 22"><path d="M10 1l9 10h-5v10H6V11H1z" fill="#fff"/></svg></div></div>
        </div>
      </div>

      <div class="header">
        <div class="brand">
          ${ic(P.menu, 48, "#5f6368")}
          <div class="logo">${mLogo(72, 52)}</div>
          <div class="word-g">Gmail</div>
        </div>
        <div class="searchbox">${ic(P.search, 48, "#5f6368")}<span>Search mail</span><div class="caret"></div></div>
        <div class="hright">
          ${docmoto("#7cc77f", 36, .7)}
          <span class="add">Add to Docmoto</span>
          <div class="gaps">
            ${ic(P.help, 48, "#5f6368")}
            ${ic(P.gear, 48, "#5f6368")}
            <svg class="dots" viewBox="0 0 48 48" fill="#5f6368">${[12, 24, 36].map((y) => [12, 24, 36].map((x) => svg`<circle cx=${x} cy=${y} r="4"></circle>`))}</svg>
            <div class="avatar">n</div>
          </div>
        </div>
      </div>

      <div class="body">
        <div class="side">
          <div class="compose-btn">
            <svg width="48" height="48" viewBox="0 0 48 48"><path d="M21 0h8v20h-8z" fill="#ea4335"/><path d="M21 28h8v20h-8z" fill="#34a853"/><path d="M0 20h21v9H0z" fill="#fbbc05"/><path d="M21 29l8-9h19v9z" fill="#4285f4"/><path d="M21 20h8l-8 9z" fill="#ea4335"/><path d="M21 29h8v-9z" fill="#4285f4"/></svg>
            <span>Compose</span>
          </div>
          <div class="nav">
            ${NAV.map((n) => html`<div class="nrow ${n.cls || ""}">
              <div class="ni">${ic(n.d, 40, n.c || "#757575")}</div>
              <span class="nl">${n.l}</span>${n.n ? html`<span class="nc">${n.n}</span>` : ""}
            </div>`)}
          </div>
          <div class="lower">
            <div class="lhead meet">Meet</div>
            <div class="mrow"><div class="ni">${ic(P.video, 38, "#757575")}</div><span class="nl">Start a meeting</span></div>
            <div class="mrow"><div class="ni">${ic(P.keyboard, 40, "#757575")}</div><span class="nl">Join a meeting</span></div>
            <div class="sep2"></div>
            <div class="lhead hang">Hangouts</div>
            <div class="who">
              <svg width="56" height="56" viewBox="0 0 56 56"><circle cx="28" cy="28" r="28" fill="#a0c3ff"/><circle cx="28" cy="21" r="10" fill="#4374e0"/><path d="M10 50c0-10 8-14 18-14s18 4 18 14a28 28 0 0 1-36 0z" fill="#4374e0"/></svg>
              <span class="name">neil</span><span class="car"></span>
              <div class="add-p">${ic(P.plus, 40, "#757575")}</div>
            </div>
            <div class="chats"><div>No recent chats</div><a>Start a new one</a><i></i></div>
            <div class="foot">
              <div>${ic(P.person, 36, "#757575")}</div>
              <div class="sel"><svg width="26" height="32" viewBox="0 0 26 32"><path d="M13 0C6 0 0 5.500 0 13s6 13 12 13v6c7-3.500 14-11 14-19C26 5.500 20 0 13 0z" fill="#000"/><path d="M6 9h6v6c0 3-2 4.500-4 5v-2.500c1-.5 1.500-1.500 1.500-2.500H6zM15 9h6v6c0 3-2 4.500-4 5v-2.500c1-.5 1.500-1.500 1.500-2.500H15z" fill="#fff"/></svg></div>
              <div>${ic(P.phone, 38, "#757575")}</div>
            </div>
          </div>
        </div>

        <div class="list">
          <div class="ltools">
            <div class="bigcb"></div><div class="lcar"></div>
            <div class="lref">${ic(P.refresh, 36, "#757575")}</div>
            <div class="lmore">${ic(P.more, 32, "#5f6368")}</div>
            <span class="count">1–50 of 53</span>
            <div class="lnav">${ic(P.chevL, 32, "#5f6368")}${ic(P.chevR, 32, "#5f6368")}</div>
          </div>
          ${ROWS.map((r, i) => this.renderRow(r, i))}
        </div>
        <div class="sbar"><div></div></div>
        <div class="rail">
          <div class="cal"><svg width="32" height="32" viewBox="0 0 32 32"><rect x="1" width="30" height="8" rx="2" fill="#bdbdbd"/><path d="M0 5h32l-.5 6v19a2 2 0 0 1-2 2h-27a2 2 0 0 1-2-2V11z" fill="#3367d6"/><path d="M.5 18h31v12a2 2 0 0 1-2 2h-27a2 2 0 0 1-2-2z" fill="#4285f4"/></svg><span>31</span></div>
          <div class="m2"><svg width="32" height="32" viewBox="0 0 32 32"><path d="M2 0h28a2 2 0 0 1 2 2v21l-9 9H2a2 2 0 0 1-2-2V2a2 2 0 0 1 2-2z" fill="#f4b400"/><path d="M32 23l-9 9v-9z" fill="#fbe08a"/><circle cx="16" cy="13" r="6" fill="none" stroke="#fff" stroke-width="2"/><path d="M13 20h6v2h-6zM14 23h4v2h-4z" fill="#fff"/></svg></div>
          <div class="m3"><svg width="37" height="38" viewBox="0 0 37 38"><circle cx="18.500" cy="19" r="18.500" fill="#4285f4"/><circle cx="9" cy="19" r="3.500" fill="#fbbc05"/><path d="M14 26L28 13" stroke="#fff" stroke-width="6" stroke-linecap="round"/></svg></div>
          <div class="dv"></div>
          <div class="m4"><div class="box rb">box</div></div>
          <div class="m5">${ic(P.plus, 36, "#757575")}</div>
          <div class="bottom">${ic(P.chevR, 32, "#5f6368")}</div>
        </div>
      </div>

      <div class="win cmp">
        <div class="whead"><span>New Message</span>
          <div class="wctl">
            <svg width="24" height="24" viewBox="0 0 24 24"><path d="M2 18h20v4H2z" fill="#c8c8c8"/></svg>
            <svg style="margin-left:22px" width="22" height="22" viewBox="0 0 26 26"><path d="M16 2h8v8zM2 16v8h8zM19 7L7 19" fill="#c8c8c8" stroke="#c8c8c8" stroke-width="2"/></svg>
            <svg style="margin-left:26px" width="22" height="22" viewBox="0 0 22 22"><path d="M3 3l16 16M19 3L3 19" stroke="#d0d0d0" stroke-width="3.400"/></svg>
          </div>
        </div>
        <div class="field f1"><span>To</span><span>Cc Bcc</span></div>
        <div class="field"><span>Subject</span></div>
        <div class="cbody"></div>
        <div class="cfoot">
          <div class="sendb"><div class="a">Send</div><div class="b"><i></i></div></div>
          <div class="tools">
            <div>${docmoto("#8ac68d", 32)}</div>
            <div>${ic(P.fmt, 36, "#757575")}</div>
            <div>${ic(P.clip, 36, "#757575")}</div>
            <div>${ic(P.link, 36, "#757575")}</div>
            <div>${ic(P.emoji, 38, "#757575")}</div>
            <div>${ic(P.drive, 36, "#757575")}</div>
            <div>${ic(P.photo, 38, "#757575")}</div>
            <div><svg width="36" height="36" viewBox="0 0 36 36" fill="#757575"><path d="M5 14V9a8 8 0 0 1 16 0v2h-3V9a5 5 0 0 0-10 0v5zM2 13h20v3a10 10 0 0 0-12 17H2z"/><circle cx="22" cy="24" r="10" fill="none" stroke="#757575" stroke-width="3"/><path d="M21 18h2v6l4 3-1 1.500-5-3.500z"/></svg></div>
            <div><svg width="36" height="36" viewBox="0 0 36 36" fill="#757575"><path d="M22 2l9 5-3 5-9-5zM18 9l9 5-11 19-7 2-1-7z"/></svg></div>
          </div>
          <div class="cdiv"></div>
          <div class="box cb2">box</div>
          <div class="cright">${ic(P.more, 40, "#757575")}${ic(P.trash, 40, "#757575")}</div>
        </div>
      </div>

      <div class="win doc">
        <div class="whead"><span>DocMoto File Selector</span>
          <div class="wctl">
            <svg width="20" height="20" viewBox="0 0 20 20"><path d="M0 12h20v4H0z" fill="#c8c8c8"/></svg>
            <svg style="margin-left:29px" width="18" height="18" viewBox="0 0 18 18"><path d="M2 2l14 14M16 2L2 16" stroke="#d0d0d0" stroke-width="3"/></svg>
          </div>
        </div>
        <div class="tree">${TREE.map((n) => this.renderNode(n))}</div>
        <div class="attach">Attach</div>
      </div>
    </div>`;
  }
}
